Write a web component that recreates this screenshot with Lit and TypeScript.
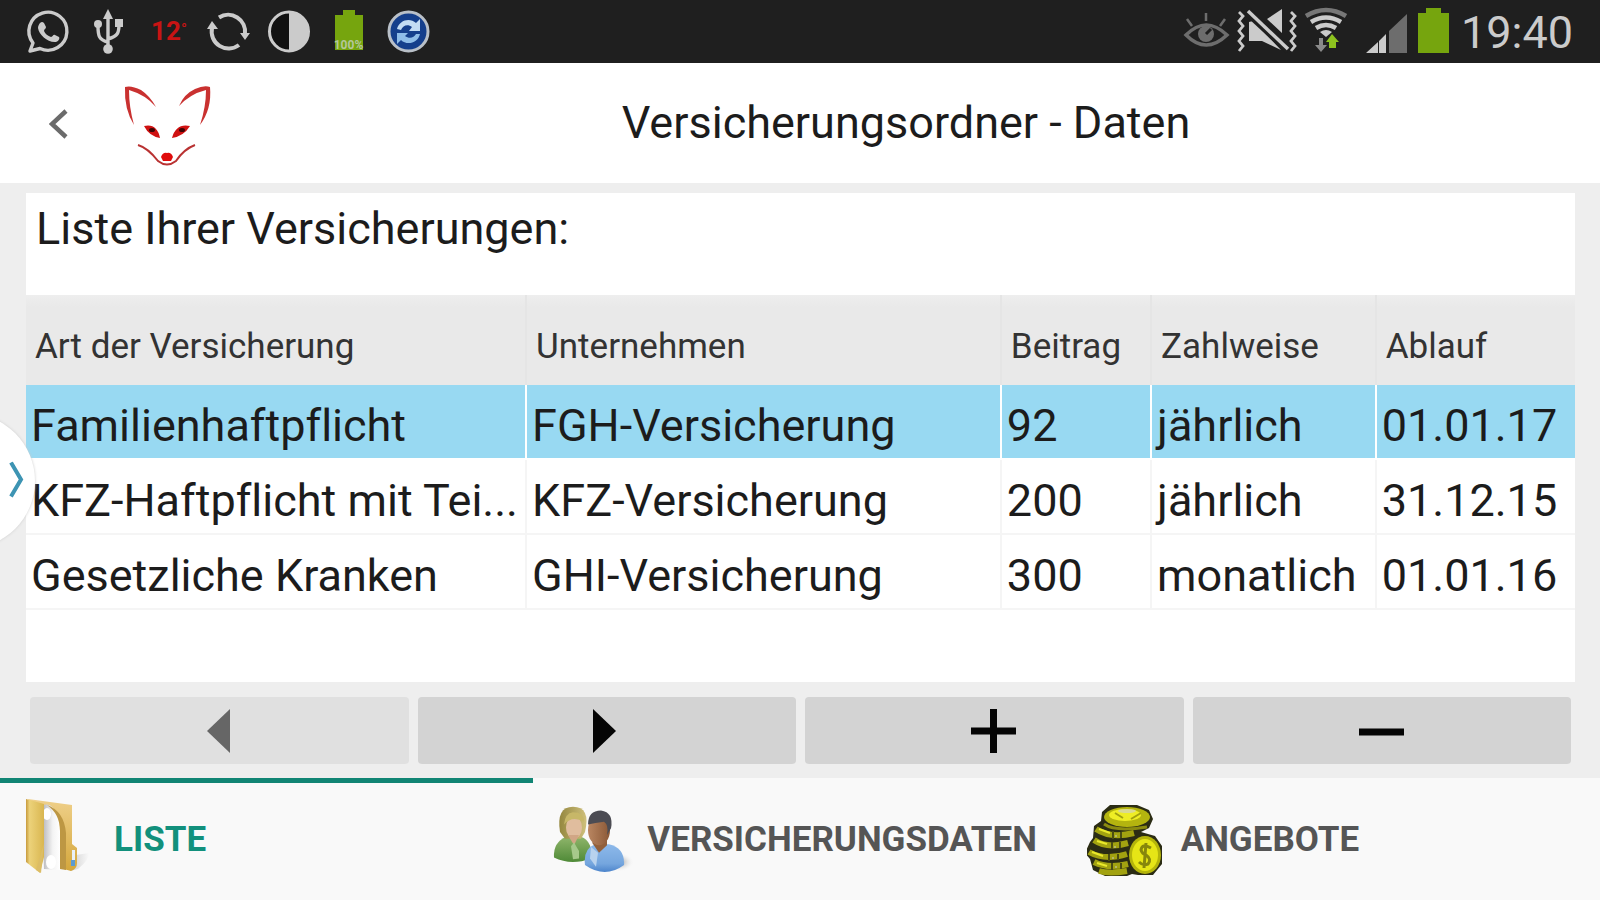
import { LitElement, html, css, svg } from "lit";
import { customElement, state } from "lit/decorators.js";
import { classMap } from "lit/directives/class-map.js";

interface Policy {
  kind: string;
  company: string;
  fee: string;
  interval: string;
  expiry: string;
}

const POLICIES: Policy[] = [
  { kind: "Familienhaftpflicht", company: "FGH-Versicherung", fee: "92", interval: "jährlich", expiry: "01.01.17" },
  { kind: "KFZ-Haftpflicht mit Tei...", company: "KFZ-Versicherung", fee: "200", interval: "jährlich", expiry: "31.12.15" },
  { kind: "Gesetzliche Kranken", company: "GHI-Versicherung", fee: "300", interval: "monatlich", expiry: "01.01.16" },
];

@customElement("status-bar")
class StatusBar extends LitElement {
  static styles = css`
    :host {
      display: flex;
      align-items: center;
      justify-content: space-between;
      height: 63px;
      padding: 0 27px 0 19px;
      background: #1f1f1f;
      color: #cbcbcb;
      font-family: Roboto, sans-serif;
    }
    .group { display: flex; align-items: center; }
    .slot { width: 60px; height: 63px; display: block; }
    .temp { width: 60px; text-align: center; color: #c81414; font-size: 26px; font-weight: 700; line-height: 63px; }
    .deg { font-size: 16px; font-weight: 400; vertical-align: 5px; line-height: 16px; }
    .sys { height: 63px; display: block; }
    .pct { font: 700 12px Roboto, sans-serif; }
    .clock { font-size: 45px; line-height: 61px; padding: 2px 0 0 4px; }
  `;

  render() {
    return html`
      <div class="group">
        <svg class="slot" viewBox="19 0 60 63" fill="none" stroke="#cbcbcb" aria-hidden="true">
          <path d="M33 43 A19 19 0 1 1 40 48.5 L30 51 Z" stroke-width="3.4" stroke-linejoin="round" />
          <path d="M40 23c2-2 4-1 5 2l1 2c0 2-2 2-2 4 1 3 4 5 7 6 2 0 2-3 4-2l4 2c1 1 0 4-3 5-8 1-17-7-18-14 0-2 1-4 2-5z" fill="#cbcbcb" stroke="none" />
        </svg>
        <svg class="slot" viewBox="79 0 60 63" fill="none" stroke="#cbcbcb" stroke-width="3.400" aria-hidden="true">
          <path d="M108 14V48M108 42C99 40 98 36 98 26M108 39C118 36 119 33 119 24" />
          <path d="M103 19L108 9L113 19Z" fill="#cbcbcb" stroke="none" />
          <circle cx="98" cy="24" r="4" fill="#cbcbcb" stroke="none" />
          <rect x="115" y="19" width="8" height="8" fill="#cbcbcb" stroke="none" />
          <circle cx="108" cy="49" r="4.8" fill="#cbcbcb" stroke="none" />
        </svg>
        <span class="temp">12<span class="deg">°</span></span>
        <svg class="slot" viewBox="199 0 60 63" fill="none" stroke="#cbcbcb" stroke-width="4" aria-hidden="true">
          <path d="M219 17.500A17 17 0 0 1 245 34" />
          <path d="M239 45A17 17 0 0 1 212 28" />
          <path d="M240 33H250L245 40Z M207 29H218L212 21Z" fill="#cbcbcb" stroke="none" />
        </svg>
        <svg class="slot" viewBox="259 0 60 63" aria-hidden="true">
          <circle cx="289" cy="31.500" r="19.500" fill="#111" stroke="#cbcbcb" stroke-width="3" />
          <path d="M289 12A19.500 19.500 0 0 1 289 51Z" fill="#cbcbcb" />
        </svg>
        <svg class="slot" viewBox="319 0 60 63" aria-hidden="true">
          <path d="M335 15H343V10H355V15H363V50H335Z" fill="#76a50e" />
          <text class="pct" x="348.500" y="49" text-anchor="middle" fill="#b4c79a">100%</text>
        </svg>
        <svg class="slot" viewBox="379 0 60 63" aria-hidden="true">
          <circle cx="408.500" cy="31.500" r="19.500" fill="#153f8c" stroke="#b9c0c8" stroke-width="3" />
          <path d="M397 29C399 20 410 17 416 23L420 19V31H409L412 27C408 24 403 25 401 30Z" fill="#c3dcf3" />
          <path d="M420 34C418 43 407 46 401 40L397 44V33H408L405 36C409 39 414 38 416 34Z" fill="#8fbde8" />
        </svg>
      </div>
      <div class="group">
        <svg class="sys" width="54" viewBox="1180 0 54 63" fill="none" stroke="#6d6d6d" aria-hidden="true">
          <path d="M1185 35Q1205 15 1226 35Q1205 55 1185 35Z" stroke-width="3.500" />
          <circle cx="1205" cy="34" r="8" fill="#6d6d6d" stroke="none" />
          <path d="M1205 34L1210 29" stroke="#1f1f1f" stroke-width="3" />
          <path d="M1186 19L1191 26M1205 13V21M1224 19L1219 26" stroke-width="2.500" />
        </svg>
        <svg class="sys" width="66" viewBox="1234 0 66 63" fill="none" stroke="#cbcbcb" aria-hidden="true">
          <path d="M1238 12l4 4-4 5 4 5-4 5 4 5-4 5 4 5-4 5M1290 12l4 4-4 5 4 5-4 5 4 5-4 5 4 5-4 5" stroke-width="2.800" />
          <path d="M1248 22V41H1261L1280 50L1252 21Z M1266 19L1281 9V33Z" fill="#cbcbcb" stroke="none" />
          <path d="M1246 11L1288 50" stroke="#1f1f1f" stroke-width="9" />
          <path d="M1247 11L1287 49" stroke-width="3.500" />
        </svg>
        <svg class="sys" width="56" viewBox="1300 0 56 63" fill="none" stroke="#cbcbcb" stroke-width="4.500" aria-hidden="true">
          <path d="M1305 16Q1325 4 1345 16" stroke="#777" />
          <path d="M1310 22Q1325 13 1340 22M1315 28Q1325 22 1335 28" />
          <path d="M1319 32Q1325 28 1331 32L1325 37Z" fill="#cbcbcb" stroke="none" />
          <path d="M1318 38h4v7h4l-6 7-6-7h4z" fill="#8a8a8a" stroke="none" />
          <path d="M1328 48h7v-6h3l-7-8-6 8h3z" fill="#8dc21f" stroke="none" />
        </svg>
        <svg class="sys" width="56" viewBox="1356 0 56 63" aria-hidden="true">
          <path d="M1365 53L1377 42V53Z M1378 41L1385 34V53H1378Z" fill="#cbcbcb" />
          <path d="M1388 31L1406 14V53H1388Z" fill="#6d6d6d" />
        </svg>
        <svg class="sys" width="44" viewBox="1412 0 44 63" aria-hidden="true">
          <path d="M1417 13H1425V8H1440V13H1448V53H1417Z" fill="#76a50e" />
        </svg>
        <time class="clock">19:40</time>
      </div>
    `;
  }
}

const folderIcon = svg`
  <defs>
    <linearGradient id="front" x1="0" x2="1"><stop offset="0" stop-color="#c79a3d" /><stop offset=".2" stop-color="#ecd27a" /><stop offset="1" stop-color="#d9b650" /></linearGradient>
    <linearGradient id="back" x1="0" x2="0" y1="0" y2="1"><stop offset="0" stop-color="#efd08a" /><stop offset="1" stop-color="#d4a73c" /></linearGradient>
    <linearGradient id="paper" x1="0" x2="1"><stop offset="0" stop-color="#b4b4b8" /><stop offset=".6" stop-color="#f4f4f4" /><stop offset="1" stop-color="#fff" /></linearGradient>
    <linearGradient id="shade" x1="0" x2="1"><stop offset="0" stop-color="#cfcfcf" /><stop offset="1" stop-color="#f9f9f9" /></linearGradient>
  </defs>
  <g transform="translate(0 -2)">
    <path d="M50 74L56 58L69 56Q70 62 58 72Z" fill="url(#shade)" />
    <path d="M8 2L52 8V47L57 51V66Q57 72 51 74L40 71Z" fill="url(#back)" />
    <path d="M22 9Q28 5 34 12Q40 20 40 34V73L24 72Z" fill="url(#paper)" />
    <path d="M27 8Q44 14 46 36V73L40 72V34Q40 17 27 8Z" fill="#bd9743" />
    <ellipse cx="27" cy="17" rx="4" ry="6" fill="#fff" /><ellipse cx="31" cy="65" rx="5" ry="7" fill="#fff" />
    <path d="M6 2L24 7V60L20 76L6 65Z" fill="url(#front)" />
    <path d="M24 46L21 76L16 73Z" fill="#dcbd66" />
    <rect x="52" y="53" width="3" height="14" fill="#e9f1f7" /><rect x="51" y="63" width="4" height="6" fill="#5b9bd1" />
  </g>
`;

const peopleIcon = svg`
  <defs>
    <linearGradient id="green" x1="0" x2="0" y1="0" y2="1"><stop offset="0" stop-color="#8fb56b" /><stop offset="1" stop-color="#4f8a37" /></linearGradient>
    <linearGradient id="blue" x1="0" x2="0" y1="0" y2="1"><stop offset="0" stop-color="#8db9ea" /><stop offset=".7" stop-color="#75a6de" /><stop offset="1" stop-color="#4c84cb" /></linearGradient>
    <linearGradient id="hair" x1="0" x2="1"><stop offset="0" stop-color="#94873f" /><stop offset="1" stop-color="#cfc07c" /></linearGradient>
    <linearGradient id="face" x1="0" x2="1"><stop offset="0" stop-color="#b98661" /><stop offset="1" stop-color="#8b5836" /></linearGradient>
    <radialGradient id="soft"><stop offset="0" stop-color="#909090" /><stop offset="1" stop-color="#f9f9f9" stop-opacity="0" /></radialGradient>
  </defs>
  <g transform="translate(0 3) scale(1 .94)">
    <ellipse cx="66" cy="64" rx="15" ry="10" fill="url(#soft)" />
    <path d="M1 59Q0 43 13 37H28Q40 42 38 60Q18 68 1 59Z" fill="url(#green)" />
    <path d="M7 32Q3 5 20 5Q38 5 32 32L28 39H12Z" fill="url(#hair)" />
    <ellipse cx="21" cy="27" rx="8" ry="12" fill="#e0bd9e" />
    <path d="M15 35H26L21 46Z" fill="#d1a685" />
    <path d="M11 24Q19 14 31 21Q31 11 20 11Q12 12 11 24Z" fill="#c7b768" />
    <path d="M18 47L21 43L26 52V60L20 61Z" fill="#a6c98b" />
    <path d="M32 67Q30 50 42 45H56Q72 49 71 67Q52 82 32 67Z" fill="url(#blue)" />
    <path d="M39 43L54 39V46L46 54Z" fill="#92603b" />
    <ellipse cx="46" cy="30" rx="11" ry="16" fill="url(#face)" />
    <path d="M35 24Q35 9 48 9Q61 11 58 28L54 35Q56 24 51 21Q42 22 35 24Z" fill="#4c4c53" />
    <path d="M38 48L45 54L43 69L37 60Z" fill="#b8d2ee" />
  </g>
`;

const coinsIcon = svg`
  <g transform="translate(-2 5)">
    <path d="M25 1H52L64 6L68 15L64 24L56 28L70 32L77 42V60L68 71H53L47 70L42 72H20L8 66L5 55L0 49L5 38L8 34L9 22L16 17L17 8Z" fill="#2b2c14" />
    <ellipse cx="42" cy="13" rx="23" ry="10" fill="#b4b40f" />
    <ellipse cx="40" cy="11" rx="16" ry="6" fill="#eeed25" />
    <ellipse cx="42" cy="7" rx="9" ry="2" fill="#d9d994" />
    <path d="M30 9L38 14M46 15L56 9" stroke="#a0a010" stroke-width="2" />
    <path d="M19 20Q30 28 62 23" stroke="#8b8b10" stroke-width="3" fill="none" />
    <g fill="none" stroke="#a2a210" stroke-width="6">
      <path d="M11 25Q26 35 49 29" /><path d="M9 36Q22 45 43 39" /><path d="M4 48Q20 57 42 50" /><path d="M9 58Q23 65 43 60" /><path d="M14 67Q24 70 42 67" />
    </g>
    <g fill="none" stroke="#eae92b" stroke-width="2">
      <path d="M14 25L25 29" /><path d="M12 37L22 40" /><path d="M7 48L18 52" /><path d="M12 59L22 62" />
    </g>
    <g stroke="#4b4c12" stroke-width="2"><path d="M28 27V35M36 28V34M27 38V45M35 38V44M24 50V57M33 50V56M27 59V66M36 59V65" /></g>
    <g stroke="#b5b56a" stroke-width="2"><path d="M31 31V33M30 42V44M28 53V55M31 62V64" /></g>
    <ellipse cx="60" cy="51" rx="16" ry="19" fill="#b4b40b" />
    <ellipse cx="60" cy="51" rx="13" ry="16" fill="#e6e516" />
    <path d="M66 44Q57 39 56 46Q57 50 61 51Q67 55 63 60Q58 62 54 58M61 39L59 64" stroke="#86860c" stroke-width="3" fill="none" />
  </g>
`;

@customElement("app-root")
class AppRoot extends LitElement {
  @state() private selected = 0;
  @state() private tab = 0;

  static styles = css`
    :host {
      display: flex;
      flex-direction: column;
      min-height: 100vh;
      background: #eee;
      color: #1c1c1c;
      font-family: Roboto, sans-serif;
      font-variant-ligatures: none;
      overflow: hidden;
    }
    button { font: inherit; color: inherit; border: 0; padding: 0; cursor: pointer; }
    .header { display: flex; align-items: center; height: 120px; background: #fff; }
    .back { display: grid; place-items: center; width: 118px; height: 120px; background: none; }
    .logo { display: block; width: 94px; height: 120px; }
    .title { flex: 1; margin: 0; text-align: center; font-size: 45px; line-height: 52px; font-weight: 400; }
    .content { position: relative; flex: 1; display: flex; flex-direction: column; padding: 10px 25px 14px 26px; }
    .caption { margin: 0; height: 92px; padding: 10px 10px 0; background: #fff; font-size: 45px; line-height: 52px; font-weight: 400; }
    .sheet { flex: 1; background: #fff; }
    .table { width: 100%; table-layout: fixed; border-spacing: 0; }
    .c-kind { width: 32.35%; }
    .c-company { width: 30.65%; }
    .c-fee { width: 9.7%; }
    .c-interval { width: 14.5%; }
    .th {
      height: 90px;
      box-sizing: border-box;
      padding: 12px 9px 0;
      background: linear-gradient(#eee, #e9e9e9 12px);
      border-right: 2px solid #e5e5e5;
      text-align: left;
      font-size: 35px;
      font-weight: 400;
      color: #333;
    }
    .td {
      height: 75px;
      box-sizing: border-box;
      padding: 8px 0 0 5px;
      border-right: 2px solid #f5f5f5;
      border-bottom: 2px solid #f5f5f5;
      font-size: 45px;
      line-height: 52px;
      white-space: nowrap;
      overflow: hidden;
      text-overflow: ellipsis;
    }
    .th:last-child, .td:last-child { border-right: 0; }
    .selected .td { background: #98d9f2; border-color: #fff; }
    .actions { display: grid; grid-template-columns: repeat(4, 1fr); gap: 9px; padding: 15px 4px 0; }
    .action { display: grid; place-items: center; height: 67px; border-radius: 4px; background: #d3d3d3; color: #050505; }
    .action:disabled { background: #e0e0e0; color: #666; cursor: default; }
    .handle {
      position: absolute;
      left: -100px;
      top: 50%;
      width: 135px;
      height: 135px;
      transform: translateY(-50%);
      border-radius: 50%;
      background: #fff;
      box-shadow: 0 0 3px #ccc;
    }
    .handle-mark { display: block; margin-left: 108px; }
    .tabs { display: grid; grid-template-columns: repeat(3, 1fr); height: 122px; background: #f9f9f9; }
    .tab {
      display: flex;
      align-items: center;
      gap: 14px;
      padding: 0 0 0 20px;
      background: none;
      color: #555;
      font-size: 35px;
      font-weight: 700;
    }
    .tab.active { color: #12907c; box-shadow: inset 0 5px #118574; }
    .tab-icon { width: 80px; height: 80px; display: block; }
  `;

  render() {
    const icons = [folderIcon, peopleIcon, coinsIcon];
    const last = POLICIES.length - 1;
    return html`
      <status-bar></status-bar>
      <header class="header">
        <button class="back" aria-label="Zurück">
          <svg width="20" height="32" viewBox="0 0 20 32"><path d="M17 4L3 17L17 30" fill="none" stroke="#6b6b6b" stroke-width="4.500" /></svg>
        </button>
        <svg class="logo" viewBox="118 63 94 120" role="img" aria-label="Fuchs">
          <path d="M125 87Q131 85 141 90Q150 96 156 107Q146 95 129 90Q129 107 134 125Q124 109 125 87Z" fill="#c93130" />
          <path d="M210 87Q204 85 195 89Q184 94 179 106Q190 94 206 90Q206 107 200 125Q212 109 210 87Z" fill="#c93130" />
          <path d="M144 126Q157 123 160 138Q149 136 144 126Z M190 126Q176 123 172 138Q184 136 190 126Z" fill="#cf1111" />
          <ellipse cx="152" cy="130" rx="3" ry="2" fill="#3d0505" /><ellipse cx="182" cy="130" rx="3" ry="2" fill="#3d0505" />
          <path d="M138 145Q148 148 158 161Q167 168 176 161Q184 149 195 145" fill="none" stroke="#b93232" stroke-width="2" />
          <path d="M161 157Q163 152 167 153Q171 152 173 157L171 161H163Z" fill="#e00c0c" />
        </svg>
        <h1 class="title">Versicherungsordner - Daten</h1>
      </header>
      <main class="content">
        <h2 class="caption">Liste Ihrer Versicherungen:</h2>
        <div class="sheet">
          <table class="table">
            <colgroup>
              <col class="c-kind" /><col class="c-company" /><col class="c-fee" /><col class="c-interval" /><col />
            </colgroup>
            <thead>
              <tr>
                ${["Art der Versicherung", "Unternehmen", "Beitrag", "Zahlweise", "Ablauf"].map((t) => html`<th class="th" scope="col">${t}</th>`)}
              </tr>
            </thead>
            <tbody>
              ${POLICIES.map(
                (p, i) => html`
                  <tr class=${classMap({ selected: i === this.selected })} @click=${() => (this.selected = i)}>
                    ${[p.kind, p.company, p.fee, p.interval, p.expiry].map((v) => html`<td class="td">${v}</td>`)}
                  </tr>
                `
              )}
            </tbody>
          </table>
        </div>
        <div class="actions">
          <button class="action" aria-label="Vorheriger" ?disabled=${this.selected === 0} @click=${() => this.selected--}>
            <svg width="24" height="44" viewBox="0 0 24 44"><path d="M23 0V44L0 22Z" fill="currentColor" /></svg>
          </button>
          <button class="action" aria-label="Nächster" ?disabled=${this.selected === last} @click=${() => this.selected++}>
            <svg width="28" height="44" viewBox="0 0 28 44"><path d="M0 0V44L23 22Z" fill="currentColor" /></svg>
          </button>
          <button class="action" aria-label="Hinzufügen">
            <svg width="46" height="46" viewBox="0 0 46 46"><path d="M0 23H45M22.500 1V45" stroke="currentColor" stroke-width="7" /></svg>
          </button>
          <button class="action" aria-label="Entfernen">
            <svg width="46" height="46" viewBox="0 0 46 46"><path d="M0 24H45" stroke="currentColor" stroke-width="7" /></svg>
          </button>
        </div>
        <button class="handle" aria-label="Seitenleiste öffnen">
          <svg class="handle-mark" width="18" height="38" viewBox="0 0 18 38"><path d="M3 1L13 18L3 35" fill="none" stroke="#3d94b3" stroke-width="4" /></svg>
        </button>
      </main>
      <nav class="tabs" role="tablist">
        ${["LISTE", "VERSICHERUNGSDATEN", "ANGEBOTE"].map(
          (label, i) => html`
            <button class=${classMap({ tab: true, active: i === this.tab })} role="tab" aria-selected=${i === this.tab} @click=${() => (this.tab = i)}>
              <svg class="tab-icon" viewBox="0 0 80 80" aria-hidden="true">${icons[i]}</svg>${label}
            </button>
          `
        )}
      </nav>
    `;
  }
}
